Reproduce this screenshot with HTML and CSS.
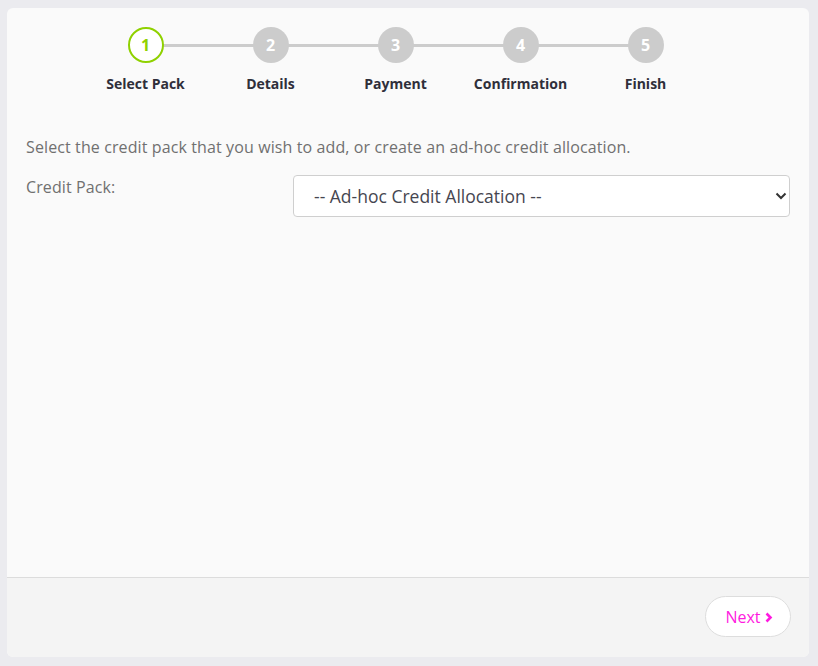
FILE: index.html
```html
<!DOCTYPE html>
<html>
<head>
<meta charset="utf-8">
<link rel="stylesheet" href="styles.css">
</head>
<body>
<div class="card">
  <div class="card-body">
    <ol class="steps">
      <li class="step active"><span class="dot">1</span><span class="label">Select Pack</span></li>
      <li class="step"><span class="dot">2</span><span class="label">Details</span></li>
      <li class="step"><span class="dot">3</span><span class="label">Payment</span></li>
      <li class="step"><span class="dot">4</span><span class="label">Confirmation</span></li>
      <li class="step"><span class="dot">5</span><span class="label">Finish</span></li>
    </ol>
    <p class="intro">Select the credit pack that you wish to add, or create an ad-hoc credit allocation.</p>
    <div class="form-row">
      <label class="form-label">Credit Pack:</label>
      <div class="select-wrap">
        <select class="select"><option>-- Ad-hoc Credit Allocation --</option></select>
        <svg class="chev" width="12" height="8" viewBox="0 0 12 8"><path d="M1.5 1.5 L6 6 L10.5 1.5" fill="none" stroke="#333" stroke-width="2"/></svg>
      </div>
    </div>
  </div>
  <div class="card-footer">
    <button class="btn-next">Next <svg class="nchev" width="8" height="11" viewBox="0 0 8 11"><path d="M1.5 1.5 L5.5 5.5 L1.5 9.5" fill="none" stroke="#ff1ae0" stroke-width="2.6"/></svg></button>
  </div>
</div>
</body>
</html>
```
FILE: styles.css
```css
* { box-sizing: border-box; }
html, body { margin: 0; padding: 0; }
body {
  background: #ebebef;
  font-family: "Open Sans", "Noto Sans", sans-serif;
  padding: 8px 9px 9px 7px;
  width: 818px;
  height: 666px;
}
.card {
  width: 802px;
  height: 649px;
  border-radius: 6px;
  background: #fafafa;
  overflow: hidden;
  display: flex;
  flex-direction: column;
}
.card-body {
  height: 570px;
  flex: none;
  padding: 19px 19px 0 19px;
  border-bottom: 1px solid #dcdcdc;
}
.steps {
  list-style: none;
  margin: 0 0 0 57px;
  padding: 0;
  display: flex;
}
.step {
  width: 125px;
  display: flex;
  flex-direction: column;
  align-items: center;
  position: relative;
}
.step + .step::before {
  content: "";
  position: absolute;
  top: 16.5px;
  left: -50%;
  right: 50%;
  height: 3px;
  background: #cccccc;
  z-index: 0;
}
.dot {
  position: relative;
  z-index: 1;
  width: 36px;
  height: 36px;
  border-radius: 50%;
  background: #cccccc;
  color: #ffffff;
  font-weight: 700;
  font-size: 16px;
  display: flex;
  align-items: center;
  justify-content: center;
}
.step.active .dot {
  background: #ffffff;
  border: 2px solid #8fd100;
  color: #8fd100;
}
.label {
  margin-top: 11px;
  font-size: 14px;
  font-weight: 700;
  line-height: 20px;
  color: #2f2f3a;
}
.intro {
  margin: 41px 0 0 0;
  font-size: 16px;
  line-height: 24px;
  letter-spacing: 0.11px;
  color: #707070;
}
.form-row {
  display: grid;
  grid-template-columns: 267px 1fr;
  margin-top: 16px;
}
.form-label {
  font-size: 16px;
  line-height: 24px;
  letter-spacing: 0.1px;
  color: #707070;
  padding-top: 0;
}
.select-wrap {
  position: relative;
}
.select {
  -webkit-appearance: none;
  appearance: none;
  width: 100%;
  height: 42px;
  border: 1px solid #cfcfcf;
  border-radius: 4px;
  background: #ffffff;
  font-family: "Open Sans", "Noto Sans", sans-serif;
  font-size: 17.5px;
  color: #464650;
  padding: 0 40px 0 20px;
  outline: none;
}
.chev {
  position: absolute;
  right: 3px;
  top: 17px;
  pointer-events: none;
}
.card-footer {
  flex: 1;
  background: #f4f4f4;
  display: flex;
  justify-content: flex-end;
  align-items: flex-start;
  padding: 18px 18px 0 0;
}
.btn-next {
  width: 86px;
  height: 41px;
  border-radius: 21px;
  border: 1px solid #dddddd;
  background: #ffffff;
  color: #ff1ae0;
  font-family: "Open Sans", "Noto Sans", sans-serif;
  font-size: 16px;
  display: flex;
  align-items: center;
  justify-content: center;
  gap: 4px;
  padding: 0 0 0 2px;
}
.nchev { margin-top: 1px; }
```
